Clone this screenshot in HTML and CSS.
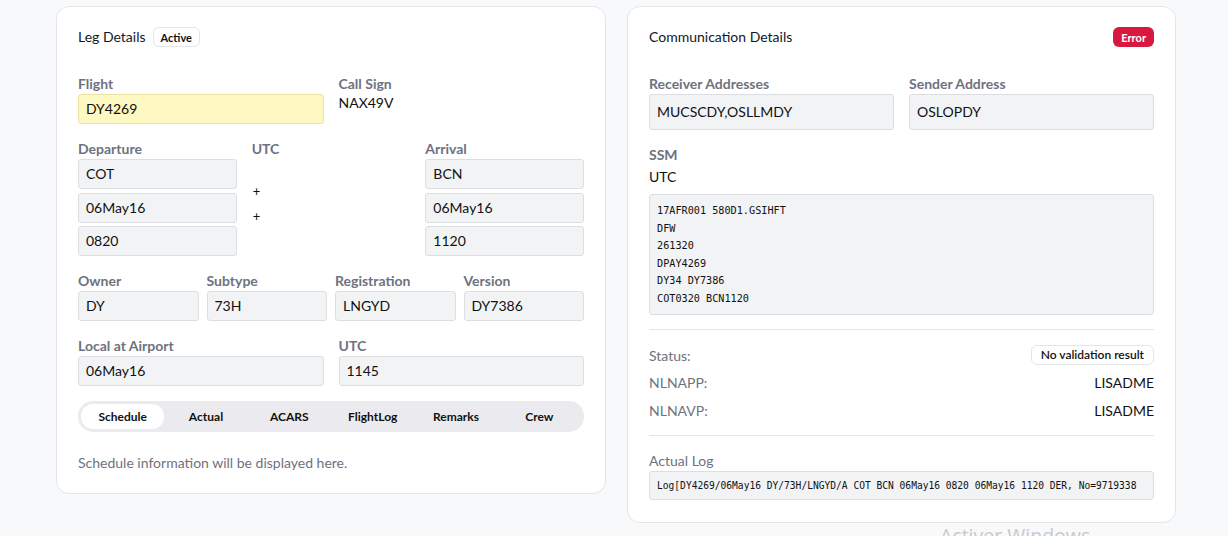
FILE: index.html
```html
<!DOCTYPE html>
<html lang="en">
<head>
<meta charset="utf-8">
<title>Leg Details</title>
<link rel="stylesheet" href="styles.css">
</head>
<body>
<div class="page">
  <section class="card card-left">
    <div class="card-head">
      <span class="title">Leg Details</span>
      <span class="badge badge-outline">Active</span>
    </div>
    <div class="grid-2">
      <div class="field">
        <label class="label">Flight</label>
        <div class="input input-yellow">DY4269</div>
      </div>
      <div class="field">
        <label class="label">Call Sign</label>
        <div class="plain">NAX49V</div>
      </div>
    </div>
    <div class="grid-3">
      <div class="field">
        <label class="label">Departure</label>
        <div class="stack">
          <div class="input">COT</div>
          <div class="input">06May16</div>
          <div class="input">0820</div>
        </div>
      </div>
      <div class="field">
        <label class="label">UTC</label>
        <div class="pluses">
          <span>+</span>
          <span>+</span>
        </div>
      </div>
      <div class="field">
        <label class="label">Arrival</label>
        <div class="stack">
          <div class="input">BCN</div>
          <div class="input">06May16</div>
          <div class="input">1120</div>
        </div>
      </div>
    </div>
    <div class="grid-4">
      <div class="field"><label class="label">Owner</label><div class="input">DY</div></div>
      <div class="field"><label class="label">Subtype</label><div class="input">73H</div></div>
      <div class="field"><label class="label">Registration</label><div class="input">LNGYD</div></div>
      <div class="field"><label class="label">Version</label><div class="input">DY7386</div></div>
    </div>
    <div class="grid-2">
      <div class="field"><label class="label">Local at Airport</label><div class="input">06May16</div></div>
      <div class="field"><label class="label">UTC</label><div class="input">1145</div></div>
    </div>
    <div class="tabs">
      <button class="tab active">Schedule</button>
      <button class="tab">Actual</button>
      <button class="tab">ACARS</button>
      <button class="tab">FlightLog</button>
      <button class="tab">Remarks</button>
      <button class="tab">Crew</button>
    </div>
    <p class="muted">Schedule information will be displayed here.</p>
  </section>

  <section class="card card-right">
    <div class="card-head between">
      <span class="title">Communication Details</span>
      <span class="badge badge-error">Error</span>
    </div>
    <div class="grid-2 gap-wide">
      <div class="field">
        <label class="label">Receiver Addresses</label>
        <div class="input input-tall">MUCSCDY,OSLLMDY</div>
      </div>
      <div class="field">
        <label class="label">Sender Address</label>
        <div class="input input-tall">OSLOPDY</div>
      </div>
    </div>
    <div class="ssm">
      <label class="label">SSM</label>
      <div class="plain utc">UTC</div>
      <pre class="code">17AFR001 580D1.GSIHFT
DFW
261320
DPAY4269
DY34 DY7386
COT0320 BCN1120</pre>
    </div>
    <hr class="divider">
    <div class="rows">
      <div class="row">
        <span class="row-key">Status:</span>
        <span class="badge badge-outline badge-wide">No validation result</span>
      </div>
      <div class="row">
        <span class="row-key">NLNAPP:</span>
        <span class="row-val">LISADME</span>
      </div>
      <div class="row">
        <span class="row-key">NLNAVP:</span>
        <span class="row-val">LISADME</span>
      </div>
    </div>
    <hr class="divider divider-2">
    <div class="log">
      <div class="row-key">Actual Log</div>
      <div class="log-box">Log[DY4269/06May16 DY/73H/LNGYD/A COT BCN 06May16 0820 06May16 1120 DER, No=9719338</div>
    </div>
  </section>
</div>
<div class="watermark">Activer Windows</div>
</body>
</html>
```

FILE: styles.css
```css
* { box-sizing: border-box; }

html, body {
  margin: 0;
  padding: 0;
  background: #f8f9fb;
  font-family: "Lato", "Open Sans", sans-serif;
  font-size: 14px;
  color: #111827;
  overflow: hidden;
  height: 536px;
}

.page {
  display: flex;
  align-items: flex-start;
  gap: 21px;
  padding: 6px 0 0 56px;
}

.card {
  width: 550px;
  background: #ffffff;
  border: 1px solid #e4e6ea;
  border-radius: 13px;
  padding: 20px 21px 20px 21px;
  display: flex;
  flex-direction: column;
}

.card-right {
  width: 549px;
  padding-bottom: 22px;
}

.card-head {
  display: flex;
  align-items: center;
  gap: 7px;
  height: 20px;
  margin-bottom: 28px;
}
.card-head.between { justify-content: space-between; }

.title {
  font-size: 14px;
  line-height: 18px;
  margin-top: -1px;
  color: #111827;
}

.badge {
  display: inline-flex;
  align-items: center;
  justify-content: center;
  height: 20px;
  padding: 0 7px;
  border-radius: 6px;
  font-size: 11px;
  font-weight: 700;
  line-height: 1;
}
.badge-outline {
  border: 1px solid #e3e5e8;
  background: #fff;
  color: #111;
}
.badge-error {
  background: #d7183f;
  color: #fff;
  padding: 0 8px;
}
.badge-wide {
  font-size: 12px;
  font-weight: 600;
  padding: 0 9px;
}

.grid-2 {
  display: grid;
  grid-template-columns: 1fr 1fr;
  gap: 15px;
  margin-bottom: 16px;
}
.grid-3 {
  display: grid;
  grid-template-columns: 1fr 1fr 1fr;
  gap: 15px;
  margin-bottom: 16px;
}
.grid-4 {
  display: grid;
  grid-template-columns: repeat(4, 1fr);
  gap: 8px;
  margin-bottom: 16px;
}

.field {
  display: flex;
  flex-direction: column;
  min-width: 0;
}

.label {
  display: block;
  height: 18px;
  line-height: 18px;
  margin-bottom: 1px;
  font-size: 14px;
  font-weight: 700;
  color: #6e7280;
}

.input {
  height: 30px;
  line-height: 28px;
  padding: 0 7px;
  background: #f2f3f5;
  border: 1px solid #dcdee2;
  border-radius: 3px;
  font-size: 14px;
  color: #111;
  white-space: nowrap;
  overflow: hidden;
}
.input-yellow {
  background: #fef8c2;
  border-color: #e9e1a6;
}
.input-tall {
  height: 36px;
  line-height: 34px;
}

.plain {
  font-size: 14px;
  line-height: 18px;
  color: #111;
}

.stack {
  display: flex;
  flex-direction: column;
  gap: 3.5px;
}

.pluses {
  display: flex;
  flex-direction: column;
  padding: 24px 0 0 1px;
  gap: 8px;
  font-size: 13px;
  line-height: 17px;
  color: #111;
}

.tabs {
  display: grid;
  grid-template-columns: repeat(6, 1fr);
  height: 31px;
  padding: 3px;
  background: #ebebef;
  border-radius: 15px;
  margin-top: -1px;
}
.tab {
  border: 0;
  background: transparent;
  font-family: inherit;
  font-size: 12px;
  font-weight: 700;
  color: #111;
  border-radius: 12px;
  padding: 0;
  cursor: pointer;
}
.tab.active {
  background: #ffffff;
}

.muted {
  margin: 21px 0 0;
  line-height: 20px;
  font-size: 14px;
  color: #6e7280;
}

/* right card */
.gap-wide { gap: 15px; margin-bottom: 16px; }

.ssm {
  display: flex;
  flex-direction: column;
}
.utc {
  margin-top: 2px;
  line-height: 20px;
  margin-bottom: 7px;
}
.code {
  margin: 0;
  height: 121px;
  padding: 7px 7px;
  background: #f2f3f5;
  border: 1px solid #dcdee2;
  border-radius: 3px;
  font-family: "DejaVu Sans Mono", "Liberation Mono", monospace;
  font-size: 10.2px;
  line-height: 17.5px;
  color: #111;
}

.divider {
  border: 0;
  border-top: 1px solid #e3e5e8;
  margin: 14px 0 0;
  height: 0;
}

.rows {
  display: flex;
  flex-direction: column;
  padding-top: 14px;
}
.row {
  display: flex;
  justify-content: space-between;
  align-items: center;
  height: 28px;
}
.row:first-child { height: 22px; margin-bottom: 2px; }

.row-key {
  font-size: 14px;
  color: #6e7280;
}
.row-val {
  font-size: 14px;
  color: #111;
}

.divider-2 { margin-top: 11px; }

.log {
  display: flex;
  flex-direction: column;
  padding-top: 15px;
}
.log .row-key { line-height: 20px; }
.log-box {
  height: 29px;
  line-height: 27px;
  padding: 0 7px;
  background: #f2f3f5;
  border: 1px solid #dcdee2;
  border-radius: 3px;
  font-family: "DejaVu Sans Mono", "Liberation Mono", monospace;
  font-size: 9.6px;
  white-space: nowrap;
  overflow: hidden;
  color: #111;
}

.watermark {
  position: absolute;
  left: 940px;
  top: 522px;
  font-family: "Open Sans", sans-serif;
  font-size: 19.5px;
  color: #c9cacc;
  white-space: nowrap;
}
```
